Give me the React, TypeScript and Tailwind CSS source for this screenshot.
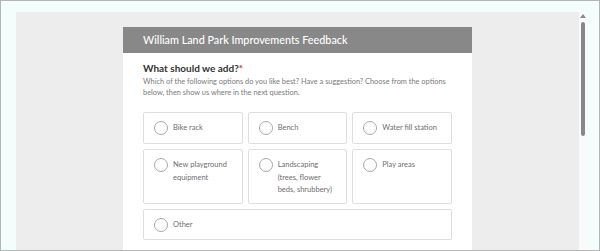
import React from "react";

const Radio = () => (
  <span className="block h-[14px] w-[14px] shrink-0 rounded-full border-[1.5px] border-[#a8a8a8] bg-white" />
);

const Option = ({ label, className = "" }: { label: React.ReactNode; className?: string }) => (
  <div className={`flex gap-[5px] rounded-[2px] border border-[#dedede] bg-white pl-[10px] pr-[4px] pt-[8px] ${className}`}>
    <Radio />
    <div className="pt-[1px] text-[7.5px] leading-[12.5px] text-[#6e6e6e]">{label}</div>
  </div>
);

export default function App() {
  return (
    <div
      className="flex h-[251px] w-[600px] overflow-hidden border border-[#b5b5b5] bg-[#f3fdfc]"
      style={{ fontFamily: "Lato, 'Open Sans', sans-serif" }}
    >
      <div className="flex flex-1 pl-[15px] pt-[11px]">
        <div className="flex-1 bg-[#ededed]">
          <div className="mx-auto mt-[15px] h-[300px] w-[349px] bg-white">
            <div className="flex h-[26px] items-center bg-[#888888] pl-[20px] text-[10.8px] font-medium text-white">
              William Land Park Improvements Feedback
            </div>
            <div className="px-[20px] pt-[8px]">
              <div className="text-[10px] font-bold leading-[14px] text-[#333]">
                What should we add?<span className="text-[#d0312d]">*</span>
              </div>
              <div className="mt-[2px] text-[7.4px] leading-[10.5px] text-[#7a7a7a]">
                Which of the following options do you like best? Have a suggestion? Choose from the options below, then show us where in the next question.
              </div>
              <div className="mt-[14px] grid grid-cols-3 gap-x-[5px] gap-y-[5px]">
                <Option label="Bike rack" className="h-[32px] pt-[7px]" />
                <Option label="Bench" className="h-[32px] pt-[7px]" />
                <Option label="Water fill station" className="h-[32px] pt-[7px]" />
                <Option label={<>New playground<br />equipment</>} className="h-[55px]" />
                <Option label={<>Landscaping<br />(trees, flower<br />beds, shrubbery)</>} className="h-[55px]" />
                <Option label="Play areas" className="h-[55px]" />
                <Option label="Other" className="col-span-3 h-[31px]" />
              </div>
            </div>
          </div>
        </div>
        <div className="relative w-[8px] bg-[#fafafa]">
          <svg className="absolute left-[1px] top-[2px]" width="6" height="4" viewBox="0 0 6 4">
            <path d="M3 0 L6 4 L0 4 Z" fill="#8a8a8a" />
          </svg>
          <div className="absolute left-[2px] top-[10px] h-[114px] w-[4px] rounded-full bg-[#888]" />
        </div>
      </div>
      <div className="w-[12px]" />
    </div>
  );
}
